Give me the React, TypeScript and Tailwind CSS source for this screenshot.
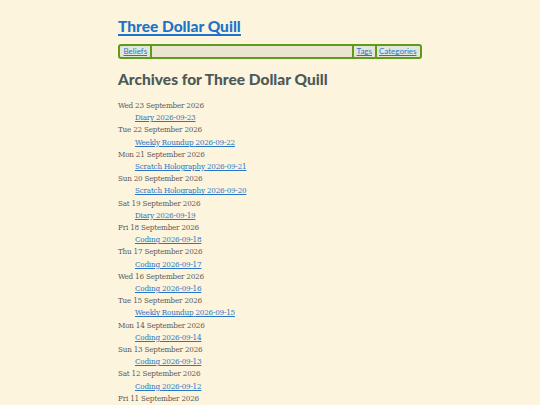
const entries: [string, string, string][] = [
  ["Wed 23 September 2026", "Diary", "2026-09-23"],
  ["Tue 22 September 2026", "Weekly Roundup", "2026-09-22"],
  ["Mon 21 September 2026", "Scratch Holography", "2026-09-21"],
  ["Sun 20 September 2026", "Scratch Holography", "2026-09-20"],
  ["Sat 19 September 2026", "Diary", "2026-09-19"],
  ["Fri 18 September 2026", "Coding", "2026-09-18"],
  ["Thu 17 September 2026", "Coding", "2026-09-17"],
  ["Wed 16 September 2026", "Coding", "2026-09-16"],
  ["Tue 15 September 2026", "Weekly Roundup", "2026-09-15"],
  ["Mon 14 September 2026", "Coding", "2026-09-14"],
  ["Sun 13 September 2026", "Coding", "2026-09-13"],
  ["Sat 12 September 2026", "Coding", "2026-09-12"],
  ["Fri 11 September 2026", "Coding", "2026-09-11"],
];

const sans = "font-['Lato',sans-serif]";
const serif = "font-['DejaVu_Serif_Condensed','DejaVu_Serif',serif] font-stretch-condensed";

export default function App() {
  return (
    <div className="h-[405px] bg-[#fcf4dd] overflow-hidden">
      <div className="mx-auto w-[304px] pt-[14px]">
        <h1 className={`${sans} text-[15.5px] font-black leading-[24px] text-[#1b74c9] underline decoration-2 underline-offset-2`}>
          <a href="#">Three Dollar Quill</a>
        </h1>
        <nav className={`${sans} mt-[6px] flex items-center rounded-[3px] border-2 border-[#5e9a1c] bg-[#ebe4d1] px-[2px] h-[15px] text-[8px] leading-[11px]`}>
          <a href="#" className="bg-[#e3e6dc] px-[1.5px] text-[#2a76c6] underline">Beliefs</a>
          <span className="mx-[1px] h-[11px] w-[2px] bg-[#5e9a1c]" />
          <span className="flex-1" />
          <span className="mx-[1px] h-[11px] w-[2px] bg-[#5e9a1c]" />
          <a href="#" className="bg-[#e3e6dc] px-[1.5px] text-[#2a76c6] underline">Tags</a>
          <span className="mx-[1px] h-[11px] w-[2px] bg-[#5e9a1c]" />
          <a href="#" className="bg-[#e3e6dc] px-[1.5px] text-[#2a76c6] underline">Categories</a>
        </nav>
        <h2 className={`${sans} mt-[9px] text-[15.5px] font-black leading-[22px] text-[#4b5959]`}>
          Archives for Three Dollar Quill
        </h2>
        <ul className={`${serif} mt-[10px] text-[8px] leading-[12.2px] tracking-[-0.2px]`}>
          {entries.map(([d, t, s]) => (
            <li key={s}>
              <div className="text-[#5a5a5a]">{d}</div>
              <div className="pl-[17px]">
                <a href="#" className="text-[#2a76c6] underline underline-offset-1">
                  {t} {s}
                </a>
              </div>
            </li>
          ))}
        </ul>
      </div>
    </div>
  );
}
